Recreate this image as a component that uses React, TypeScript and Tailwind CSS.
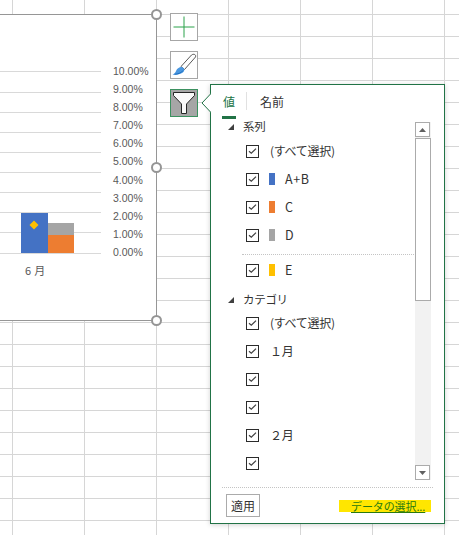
const jp = "font-['Noto_Sans_CJK_JP','Noto_Sans',sans-serif]";

const axisLabels = ["10.00%", "9.00%", "8.00%", "7.00%", "6.00%", "5.00%", "4.00%", "3.00%", "2.00%", "1.00%", "0.00%"];
const gridYs = [8, 29, 49, 69, 89, 109, 129, 149, 169, 190];

const series = [
  { label: "(すべて選択)" },
  { label: "A+B", color: "bg-[#4472c4]" },
  { label: "C", color: "bg-[#ed7d31]" },
  { label: "D", color: "bg-[#a5a5a5]" },
];

const categories = ["(すべて選択)", "１月", "", "", "２月", ""];

function Check() {
  return (
    <span className="flex w-[13px] h-[13px] shrink-0 items-center justify-center border-[1.25px] border-[#2b2b2b] bg-white">
      <svg width="9" height="8" viewBox="0 0 9 8" fill="none">
        <path d="M1 4.2 L3.3 6.2 L8 1.6" stroke="#404040" strokeWidth="1.2" />
      </svg>
    </span>
  );
}

function Row({ label, color }: { label: string; color?: string }) {
  return (
    <div className="flex items-center pl-[35px] h-[28px]">
      <Check />
      {color && <span className={"ml-[10px] w-[6px] h-[12px] " + color} />}
      <span className={color ? "ml-[10px] text-[12.5px] leading-none text-[#333] tracking-[0.6px]" : "ml-[11px] text-[12px] leading-none text-[#333] tracking-[-0.3px]"}>{label}</span>
    </div>
  );
}

function Heading({ label }: { label: string }) {
  return (
    <div className="flex items-center h-[20px] pl-[17px] gap-[9px]">
      <svg width="6" height="6" viewBox="0 0 6 6">
        <path d="M6 0 V6 H0 Z" fill="#404040" />
      </svg>
      <span className="text-[11.5px] leading-none text-[#333] tracking-[-0.3px]">{label}</span>
    </div>
  );
}

function Handle({ y }: { y: string }) {
  return <span className={"absolute left-[151px] w-[11px] h-[11px] rounded-full bg-white border-2 border-[#959595] " + y} />;
}

function ScrollButton({ up }: { up?: boolean }) {
  return (
    <div className="flex h-[15px] w-[15px] items-center justify-center border border-[#ababab] bg-white">
      <svg width="7" height="4" viewBox="0 0 7 4">
        <path d={up ? "M3.5 0 L7 4 H0 Z" : "M0 0 H7 L3.5 4 Z"} fill="#606060" />
      </svg>
    </div>
  );
}

export default function App() {
  return (
    <div className={"relative w-[459px] h-[535px] overflow-hidden bg-white bg-[linear-gradient(to_right,#d6d6d6_1px,transparent_1px),linear-gradient(to_bottom,#d6d6d6_1px,transparent_1px)] bg-[size:72px_22px] bg-[position:12px_14px] " + jp}>
      {/* chart */}
      <div className="absolute left-0 top-[14px] w-[157px] h-[307px] bg-white border-t border-r border-b border-[#969696]">
        <div className="flex pt-[48px]">
          <svg width="113" height="200" className="block shrink-0">
            {gridYs.map((y) => (
              <line key={y} x1="0" x2="101" y1={y + 0.5} y2={y + 0.5} stroke="#d9d9d9" />
            ))}
            <rect x="21" y="150" width="27" height="40" fill="#4472c4" />
            <rect x="48" y="172" width="26" height="18" fill="#ed7d31" />
            <rect x="48" y="160" width="26" height="12" fill="#a5a5a5" />
            <path d="M34 157.5 L38.5 162 L34 166.5 L29.5 162 Z" fill="#ffc000" />
          </svg>
          <div className="flex flex-col -mt-px font-['Liberation_Sans',sans-serif] text-[10.5px] text-[#595959]">
            {axisLabels.map((l) => (
              <span key={l} className="h-[18.1px] leading-[18px]">{l}</span>
            ))}
          </div>
        </div>
        <span className="absolute left-[25px] top-[247px] text-[11px] leading-4 tracking-[0.3px] text-[#595959]">6 月</span>
      </div>
      <Handle y="top-[9px]" />
      <Handle y="top-[162px]" />
      <Handle y="top-[315px]" />

      {/* chart side buttons */}
      <div className="absolute left-[170px] top-[13px] flex flex-col gap-[10px]">
        <div className="flex w-[28px] h-[28px] items-center justify-center bg-white border border-[#a6a6a6]">
          <svg width="22" height="22" viewBox="0 0 22 22">
            <path d="M11 0.5 V21.5 M0.5 11 H21.5" stroke="#2aa24a" strokeWidth="1" />
          </svg>
        </div>
        <div className="flex w-[28px] h-[28px] items-center justify-center bg-white border border-[#a6a6a6]">
          <svg width="26" height="26" viewBox="0 0 26 26">
            <path d="M10 14.5 L20.5 3 C22.5 1.5 25.5 2.5 24.5 5 L13.5 17.5 Z" fill="#fff" stroke="#595959" strokeWidth="1" />
            <path d="M9.5 15 C11 14.5 13.8 16 13.2 18.5 C12.5 21.5 6 23.5 1.5 22.5 C4 21.5 4.5 20.5 5.5 18 C6 16.5 8 15.5 9.5 15 Z" fill="#4a97e0" />
            <path d="M3.5 22.3 C7 22 10.5 21 12 18.5" stroke="#1f6fc0" strokeWidth="1" fill="none" />
          </svg>
        </div>
        <div className="flex w-[28px] h-[28px] items-center justify-center bg-[#a6a6a6] border border-[#3c9160]">
          <svg width="26" height="26" viewBox="0 0 26 26">
            <path d="M2.5 2.5 H23.5 V5.5 L15.5 14 V23.5 H10.5 V14 L2.5 5.5 Z" fill="#fafafa" stroke="#262626" strokeWidth="1" />
          </svg>
        </div>
      </div>

      {/* filter popup */}
      <div className="absolute left-[210px] top-[84px] w-[235px] h-[440px] flex flex-col bg-white border border-[#217346] shadow-[0_1px_5px_rgba(0,0,0,0.18)]">
        <svg width="10" height="20" viewBox="0 0 10 20" className="absolute left-[-10px] top-[8px]">
          <path d="M10 0.5 L1 10 L10 19.5 Z" fill="#fff" />
          <path d="M10 0.5 L1 10 L10 19.5" fill="none" stroke="#217346" />
        </svg>

        <div className="flex items-start h-[32px] shrink-0 text-[12px] leading-none text-[#333]">
          <div className="ml-[11px] w-[14px] h-[34px] flex flex-col items-center">
            <span className="mt-[11px] text-[#217346]">値</span>
            <span className="mt-auto w-[14px] h-[3px] bg-[#217346]" />
          </div>
          <span className="ml-[10px] mt-[7px] w-px h-[18px] bg-[#e1e1e1]" />
          <span className="ml-[13px] mt-[11px]">名前</span>
        </div>

        <div className="flex h-[363px] shrink-0">
          <div className="w-[204px] overflow-hidden">
            <Heading label="系列" />
            {series.map((s) => (
              <Row key={s.label} label={s.label} color={s.color} />
            ))}
            <div className="ml-[31px] mr-[1px] mt-[5px] border-t border-dotted border-[#c4c4c4]" />
            <div className="h-[1px]" />
            <Row label="E" color="bg-[#ffc000]" />
            <div className="h-[6px]" />
            <Heading label="カテゴリ" />
            <div className="-mt-px">
              {categories.map((c, i) => (
                <Row key={i} label={c} />
              ))}
            </div>
          </div>
          <div className="mt-[5px] w-[16px] h-[358px] flex flex-col bg-[#f2f2f2]">
            <ScrollButton up />
            <div className="h-[163px] mt-px border border-[#ababab] bg-white" />
            <div className="flex-1" />
            <ScrollButton />
          </div>
        </div>

        <div className="mx-[11px] mt-[7px] border-t border-dotted border-[#c4c4c4]" />
        <div className="flex items-center justify-between pl-[15px] pr-[13px] pt-[6px]">
          <button className="w-[34px] h-[23px] border-[1.5px] border-[#ababab] bg-white text-[12px] leading-none text-[#333]">適用</button>
          <a className="w-[92px] h-[12px] pl-[12px] bg-[#ffe600] text-[11px] leading-[12px] tracking-[-0.1px] text-[#2a7a10] underline whitespace-nowrap mt-[1px]">データの選択...</a>
        </div>
      </div>
    </div>
  );
}
